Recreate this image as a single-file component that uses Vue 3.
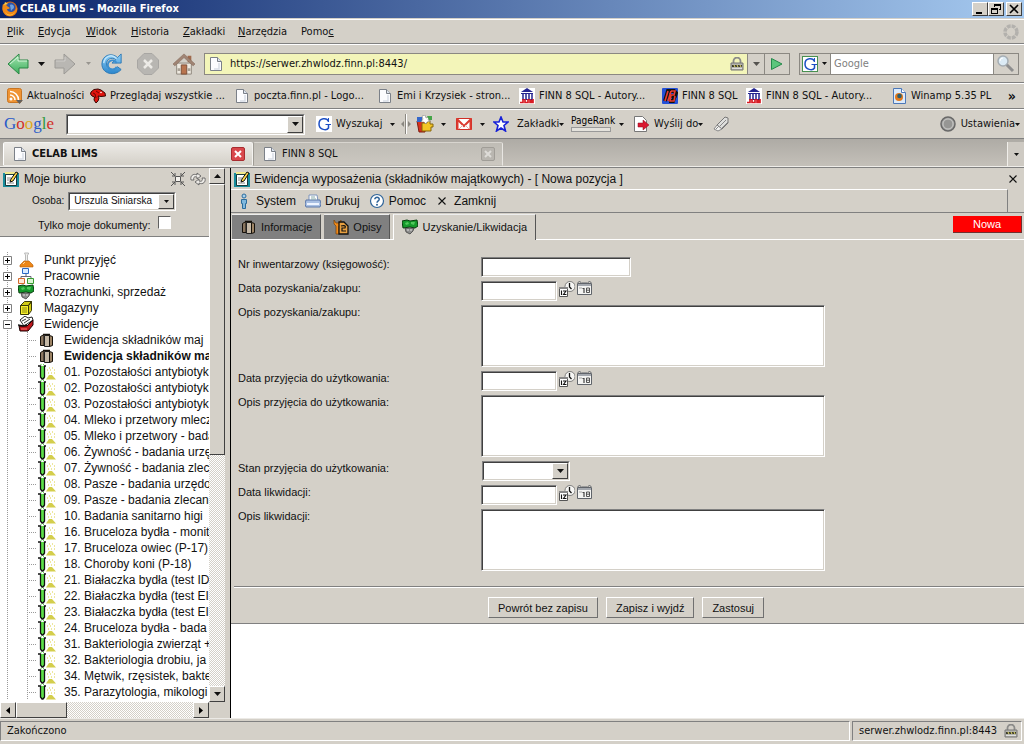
<script setup>
import { ref } from 'vue'

const menus = [
  ['', 'P', 'lik'], ['', 'E', 'dycja'], ['', 'W', 'idok'], ['', 'H', 'istoria'],
  ['', 'Z', 'akładki'], ['', 'N', 'arzędzia'], ['Pomo', 'c', '']
]
const bookmarks = [
  ['rss', 'Aktualności'], ['lizard', 'Przeglądaj wszystkie ...'], ['page', 'poczta.finn.pl - Logo...'],
  ['page', 'Emi i Krzysiek - stron...'], ['duw', 'FINN 8 SQL - Autory...'], ['finn', 'FINN 8 SQL'],
  ['duw', 'FINN 8 SQL - Autory...'], ['winamp', 'Winamp 5.35 PL']
]
const folders = [
  { icon: 'flask', label: 'Punkt przyjęć' },
  { icon: 'network', label: 'Pracownie' },
  { icon: 'money', label: 'Rozrachunki, sprzedaż' },
  { icon: 'box', label: 'Magazyny' },
  { icon: 'records', label: 'Ewidencje', open: true }
]
const leaves = [
  { icon: 'binder', label: 'Ewidencja składników maj' },
  { icon: 'binder', label: 'Ewidencja składników ma', current: true },
  ...[
    '01. Pozostałości antybiotyk', '02. Pozostałości antybiotyk', '03. Pozostałości antybiotyk',
    '04. Mleko i przetwory mlecz', '05. Mleko i przetwory - bada', '06. Żywność - badania urzę',
    '07. Żywność - badania zlec', '08. Pasze - badania urzędo', '09. Pasze - badania zlecan',
    '10. Badania sanitarno higi', '16. Bruceloza bydła - monit', '17. Bruceloza owiec (P-17)',
    '18. Choroby koni (P-18)', '21. Białaczka bydła (test ID', '22. Białaczka bydła (test EI',
    '23. Białaczka bydła (test EI', '24. Bruceloza bydła - bada', '31. Bakteriologia zwierząt +',
    '32. Bakteriologia drobiu, ja', '34. Mętwik, rzęsistek, bakte', '35. Parazytologia, mikologi'
  ].map(label => ({ icon: 'tube', label }))
]
const fields = [
  { id: 'nr', type: 'text', label: 'Nr inwentarzowy (księgowość):' },
  { id: 'data-zakupu', type: 'date', label: 'Data pozyskania/zakupu:' },
  { id: 'opis-zakupu', type: 'area', label: 'Opis pozyskania/zakupu:' },
  { id: 'data-przyjecia', type: 'date', label: 'Data przyjęcia do użytkowania:' },
  { id: 'opis-przyjecia', type: 'area', label: 'Opis przyjęcia do użytkowania:' },
  { id: 'stan', type: 'select', label: 'Stan przyjęcia do użytkowania:' },
  { id: 'data-likwidacji', type: 'date', label: 'Data likwidacji:' },
  { id: 'opis-likwidacji', type: 'area', label: 'Opis likwidacji:' }
]
const values = ref({})
const address = ref('https://serwer.zhwlodz.finn.pl:8443/')
</script>

<template>
  <div class="window">
    <svg class="defs" aria-hidden="true">
      <defs>
        <linearGradient id="gGreen" x1="0" y1="0" x2="0" y2="1"><stop offset="0" stop-color="#a8e6b4" /><stop offset="1" stop-color="#3cae5c" /></linearGradient>
        <linearGradient id="gBlue" x1="0" y1="0" x2="0" y2="1"><stop offset="0" stop-color="#8fd0f8" /><stop offset="1" stop-color="#2b86cc" /></linearGradient>
      </defs>
      <symbol id="caret" viewBox="0 0 7 4"><path d="M0 0h7L3.500 4z" fill="currentColor" /></symbol>
      <symbol id="page" viewBox="0 0 16 16"><path d="M2.500 1.500h7l4 4v9h-11z" fill="#fcfcfe" stroke="#7b8088" /><path d="M9.500 1.500v4h4" fill="#dde4ee" stroke="#7b8088" /><path d="M11 7v6H6" fill="none" stroke="#d8dde6" stroke-width="1.500" /></symbol>
      <symbol id="firefox" viewBox="0 0 16 16"><circle cx="8" cy="8" r="7.500" fill="#d9690c" /><circle cx="8.500" cy="6.500" r="5" fill="#2d53a8" /><path d="M8 4c2-1 4 0 4 2s-2 2-3 4" fill="#6fa3e0" /><path d="M1 3c-2 6 1 12 7 12 5 0 8-5 7-9-1 3-3 5-6 5-2 0-4-1-4-3 1 0 2 0 3-1L5 5C4 3 3 4 1 3z" fill="#f08a18" /><path d="M2 4l1-3 3 2zM3 11c2 3 7 4 10 0-2 4-8 5-10 0z" fill="#ffd04a" /></symbol>
      <symbol id="back" viewBox="0 0 22 22"><path d="M1 11 12 1v6h9v8h-9v6z" fill="url(#gGreen)" stroke="#2b8745" /><path d="M3 11 11 4v4h9" fill="none" stroke="#d5f5da" /></symbol>
      <symbol id="forward" viewBox="0 0 22 22"><path d="M21 11 10 1v6H1v8h9v6z" fill="#b9b7b3" stroke="#9c9a96" /><path d="M2 8h9V4" fill="none" stroke="#cfcdca" /></symbol>
      <symbol id="reload" viewBox="0 0 24 24"><path d="M18 5 22 1v10H12l4-4C11 4 6 7 6 12c0 6 8 8 12 3l4 3C15 26 1 23 1 12 1 2 12-1 18 5z" fill="url(#gBlue)" stroke="#2a77b5" /><path d="M3 11C4 4 11 0 17 6" fill="none" stroke="#c2e6fb" stroke-width="1.500" /><path d="M17 11a5 5 0 1 0 0 4" fill="none" stroke="#3a8fd0" stroke-width="2" /></symbol>
      <symbol id="stop" viewBox="0 0 22 22"><path d="M7 .5h8L21.500 7v8L15 21.500H7L.5 15V7z" fill="#b8b6b2" stroke="#a8a6a3" /><path d="m7 7 8 8M15 7l-8 8" stroke="#eceae6" stroke-width="2.500" /></symbol>
      <symbol id="home" viewBox="0 0 24 24"><path d="M4 11h16v12H4z" fill="#eee9e0" stroke="#8b8378" /><path d="M16 3h4v7h-4z" fill="#a06a4d" /><path d="M0 12 12 1l12 11-2 2L12 5 2 14z" fill="#a08474" stroke="#806455" stroke-width=".6" /><path d="M9 13h6v10H9z" fill="#b9744f" stroke="#7a4c35" /><path d="M5 18h3M16 18h3" stroke="#a9a196" stroke-width="3" /></symbol>
      <symbol id="lock" viewBox="0 0 14 14"><path d="M3.500 7V4a3.500 3.500 0 0 1 7 0v3" fill="none" stroke="#8b8b89" stroke-width="1.800" /><path d="M1 6h12v7H1z" fill="#b5b5ae" stroke="#777" /><path d="M2 8h10v2H2z" fill="#3c3c2c" /><path d="m4 8 1 2m2-2 1 2m2-2 1 2" stroke="#e8df6a" /><path d="M2 11.500h10" stroke="#dedede" /></symbol>
      <symbol id="go" viewBox="0 0 14 14"><path d="M1.500 1.500 12 7 1.500 12.500z" fill="#5cc67c" stroke="#23894a" /></symbol>
      <symbol id="glass" viewBox="0 0 18 18"><path d="m9 9 7 7" stroke="#8e8e8e" stroke-width="3" /><circle cx="6" cy="6" r="5" fill="#dcebf5" stroke="#a5adb3" stroke-width="1.500" /><path d="M3 6a3 3 0 0 1 3-3" stroke="#fff" fill="none" /></symbol>
      <symbol id="throbber" viewBox="0 0 16 16"><circle cx="8" cy="8" r="6" fill="none" stroke="#b3b1ad" stroke-width="3.500" stroke-dasharray="3.700 1" /></symbol>
      <symbol id="g" viewBox="0 0 16 16"><path d="M0 0h16v16H0z" fill="#fff" /><path d="M12.500 5.500C11 1.500 3 1.500 3 8s8 6.500 9.500 4V9" fill="none" stroke="#1c4fc4" stroke-width="1.500" /><path d="M12.500 2v4M9.500 8.500H15" stroke="#1c4fc4" /></symbol>
      <symbol id="rss" viewBox="0 0 16 16"><rect x=".5" y=".5" width="14" height="14" rx="2" fill="#ef9434" stroke="#c87522" /><circle cx="4" cy="11" r="1.500" fill="#fff" /><path d="M3 7a5 5 0 0 1 5 5M3 3.500A8.500 8.500 0 0 1 11.500 12" fill="none" stroke="#fff" stroke-width="1.600" /><path d="M9 12h7l-3.500 4z" fill="#64605c" /></symbol>
      <symbol id="lizard" viewBox="0 0 16 16"><path d="M1 4 4 1.500 8 1l3 1 4 3 .5 3-4.500.5L8 8l1 2-1 3-2 2-2-3 .5-3L2 8 .500 6z" fill="#e0140e" stroke="#3a0502" /><path d="M3 5l2 1 1 4M6 3l3 2" stroke="#710604" fill="none" /><circle cx="11" cy="4.500" r=".8" fill="#fff" /></symbol>
      <symbol id="duw" viewBox="0 0 16 16"><path d="M0 0h16v16H0z" fill="#fff" /><path d="M2 4 8 0l6 4zM2 5h12v1H2zM3 11h11v1H3z" fill="#24248f" /><path d="M4 6v5M7 6v5M10 6v5M13 6v5" stroke="#24248f" stroke-width="1.500" /><path d="M1 14.500h3V11v3.500M6 11v3.500h3V11m2 0v3.500h1.500V12v2.500H14V11" fill="none" stroke="#d81c24" stroke-width="1.700" /></symbol>
      <symbol id="finn" viewBox="0 0 16 16"><rect width="16" height="16" rx="1" fill="#2450d8" /><path d="M3 13 6 3h6l2 2-1 3H5h6l1 2-1 3H7" fill="none" stroke="#111" stroke-width="4" /><path d="M3 13 6 3m3 0h4l-1 4H9l-1 6h4l1-5M9 3 6 13" fill="none" stroke="#ec3b30" stroke-width="1.600" /></symbol>
      <symbol id="winamp" viewBox="0 0 16 16"><path d="M2.500.5h8l4 4v11h-12z" fill="#dceafa" stroke="#4d78b8" /><path d="M10.500.5v4h4" fill="#fff" stroke="#4d78b8" /><circle cx="8" cy="9" r="4" fill="#e0781c" /><circle cx="8.500" cy="8" r="2.300" fill="#2c5d6e" /></symbol>
      <symbol id="puzzle" viewBox="0 0 18 18"><path d="M1 6h8v11H3z" fill="#d8321d" stroke="#7c1c10" /><path d="M6 8h5V6h3v3h3v3h-2v4H6z" fill="#f3c526" stroke="#86660c" /><path d="M1 2h5v5H1z" fill="#3568ca" /><path d="M9 0l1 3 3-1-1 3 3 1-4 1-1 2-2-2-3 0 2-3-1-3z" fill="#fff" stroke="#777" stroke-width=".5" /><path d="M11 1h5v4h-3z" fill="#45a447" /></symbol>
      <symbol id="mail" viewBox="0 0 16 12"><path d="M.5.5h15v11H.5z" fill="#fff" stroke="#cf2e26" /><path d="M1.500 12V1.500L8 8l6.500-6.500V12" fill="none" stroke="#dc3b30" stroke-width="2" /><path d="m3 11 4-4m6 4L9 7" stroke="#e5b1ac" /></symbol>
      <symbol id="star" viewBox="0 0 16 16"><path d="m8 1 2 5h5l-4 3.500 1.500 5.500L8 12l-4.500 3L5 9.500 1 6h5z" fill="#fff" stroke="#1822d8" stroke-width="1.600" /></symbol>
      <symbol id="send" viewBox="0 0 16 16"><path d="M1.500.5h8l4 4v11h-12z" fill="#fff" stroke="#777" /><path d="M5 7h5V4l6 5-6 5v-3H5z" fill="#da1830" stroke="#8a0818" stroke-width=".5" /></symbol>
      <symbol id="marker" viewBox="0 0 16 16"><path d="m4 9 8-8 3 1v5l-6 6z" fill="#dededc" stroke="#777" /><path d="M4 9 1 13l4 2 4-2z" fill="#f3f3f1" stroke="#888" /><path d="m7 10 6-6M9 12l6-6M3 13l3-3" stroke="#888" /></symbol>
      <symbol id="orb" viewBox="0 0 16 16"><circle cx="8" cy="8" r="7" fill="#a6a6a4" stroke="#686868" stroke-width="1.500" /><circle cx="8" cy="8" r="5" fill="#969694" stroke="#c9c9c7" /></symbol>
      <symbol id="splitter" viewBox="0 0 10 20"><path d="M4 0h1v20H4z" fill="#8a8780" /><path d="M5 0h1v20H5z" fill="#fff" /><path d="M3 7v6L0 10zm4 0v6l3-3z" fill="#8a8780" /></symbol>
      <symbol id="edit" viewBox="0 0 16 16"><path d="M0 2h16v14H0z" fill="#178c9c" /><path d="M2 1h12v2H2z" fill="#f0e88c" /><path d="M2.500 3.500h11v11h-11z" fill="#fff" stroke="#1a3a3c" /><path d="M4 7h4M4 9h3M4 12h7" stroke="#888" /><path d="m7 11 1-3 5-7 2 1-5 8z" fill="#ffd94a" stroke="#111" /></symbol>
      <symbol id="compress" viewBox="0 0 14 14"><path d="M4.500 4.500h5v5h-5z" fill="#f4f2ee" stroke="#555" /><path d="m0 0 4 4M14 0l-4 4M0 14l4-4m10 4-4-4M4 1v3H1m9-3v3h3M4 13v-3H1m9 3v-3h3" fill="none" stroke="#555" /></symbol>
      <symbol id="refresh" viewBox="0 0 16 14"><path d="M1 8C0 4 3 1 7 3V1l4 3-4 3V5C4 4 3 6 4 8zM15 6c1 4-2 7-6 5v2L5 10l4-3v2c3 1 4-1 3-3z" fill="#eceae6" stroke="#555" stroke-width=".8" /></symbol>
      <symbol id="flask" viewBox="0 0 16 16"><path d="M6.500 1h4v1l-1 1v5l4 5H4l3.500-5V3z" fill="#f0f0ee" stroke="#aaa" stroke-width=".8" /><path d="m6 9-4 4v2h13v-2l-4-4z" fill="#ed8718" stroke="#b25b08" stroke-width=".6" /><path d="M5 12l2-2" stroke="#ffd69a" /></symbol>
      <symbol id="network" viewBox="0 0 16 16"><path d="M8 6v3M3 12V8.500h10V12" fill="none" stroke="#667" /><path d="M4.500.5h6v5h-6z" fill="#dcecff" stroke="#2c68c4" /><path d="M.5 10.500h6v5h-6z" fill="#ffe8d8" stroke="#d46a2c" /><path d="M9.500 10.500h6v5h-6z" fill="#daf6d4" stroke="#379b31" /></symbol>
      <symbol id="money" viewBox="0 0 16 14"><path d="M0 1 5 0l3 1 7-1 1 6-3 2-5-1-7 1z" fill="#159a2b" stroke="#063f0d" /><path d="m3 3 3-1 1 2-3 1zm6-1 4 0-1 3-3-1z" fill="#50c85c" /><path d="M3 8l4 0 5 0-1 3-3 3-4-2z" fill="#8d8d8d" stroke="#333" stroke-width=".7" /><path d="M6 9v2m3-2v2" stroke="#ddd" /></symbol>
      <symbol id="box" viewBox="0 0 16 16"><path d="m2.500 5.500 4-4h7l-3 4zM10.500 5.500l3-4v9l-3 4z" fill="#d3cb16" stroke="#3a3906" /><path d="M2.500 5.500h8v9h-8z" fill="#f8f12b" stroke="#3a3906" /><path d="M4 8h5M4 10h5M4 12h5" stroke="#8c8712" /></symbol>
      <symbol id="records" viewBox="0 0 16 16"><path d="M2 4 7 0l3 2 4-1 1 3-9 6z" fill="#fff" stroke="#222" /><path d="m4 5 4-2m-2 4 6-4" stroke="#333" /><path d="M1 10h8l6-6v5l-5 6H2z" fill="#bc171c" stroke="#1a0202" /><path d="M0 9l5 1 4-1" stroke="#111" stroke-width="1.500" fill="none" /><path d="M3 13h6" stroke="#f77" /></symbol>
      <symbol id="binder" viewBox="0 0 16 16"><path d="M1.500 4.500 5 2.500v11l-3.500 0z" fill="#8a7660" stroke="#15100a" /><path d="M5.500 3.500h5v11h-5z" fill="#c4b8a6" stroke="#222" /><path d="m10.500 3.500 3 1v9l-3 1z" fill="#9d8465" stroke="#15100a" /><path d="M4 2.500h7" stroke="#15100a" stroke-width="1.500" /></symbol>
      <symbol id="tube" viewBox="0 0 18 16"><path d="M2 2h5v11l-1 2H4l-2-2z" fill="#5ee048" /><path d="M0 2h2.500v11L4 15h1l1.500-2V2H8" fill="none" stroke="#111" stroke-width="1.300" /><path d="M3 0v1M5 0l1 1" stroke="#5ee048" /><path d="m8 15.500 3-4.500h3l4 4.500z" fill="#d4ce4c" /><path d="M11 4h1m2 0h1M9 6h1m2 0h1m3 0h1M10 9h1m2 0h1m2 0h1" stroke="#dccf3c" /></symbol>
      <symbol id="person" viewBox="0 0 8 16"><circle cx="4" cy="3" r="2" fill="#a7d2ee" stroke="#2c6c9c" /><path d="M1.500 6.500h5v4h-1v5h-3v-5h-1z" fill="#7fb8de" stroke="#2c6c9c" /></symbol>
      <symbol id="printer" viewBox="0 0 16 14"><path d="M4 7V1h8l1 6z" fill="#fff" stroke="#7d94bc" /><path d="M1 6h14l1 4-1 3H1l-1-3z" fill="#a9bfe2" stroke="#5c78aa" /><path d="M6 3h4M6 5h5" stroke="#8aa" /><path d="M2 10h12" stroke="#eef4ff" stroke-width="2" /></symbol>
      <symbol id="help" viewBox="0 0 16 16"><circle cx="8" cy="8" r="6.500" fill="#fff" stroke="#2f6499" stroke-width="1.200" /><path d="M5.800 6.300C5.800 3.600 10.500 3.600 10.200 6.500 10 8 8 8 8 9.800" fill="none" stroke="#2f6499" stroke-width="1.500" /><circle cx="8" cy="11.800" r="1" fill="#2f6499" /></symbol>
      <symbol id="cross" viewBox="0 0 8 8"><path d="m.5.5 7 7m0-7-7 7" stroke="#111" stroke-width="1.100" /></symbol>
      <symbol id="notes" viewBox="0 0 16 16"><path d="M1 1v4l2 2v8h3V7l2-2V1L6 4H3z" fill="#f08b1c" stroke="#75400a" stroke-width=".7" /><path d="M6 3h5l4 4v8H6z" fill="#e8a040" stroke="#111" stroke-width="1.300" /><path d="M8 7c4-1 5 0 4 2H9l0 3h4" fill="none" stroke="#111" stroke-width="1.200" /></symbol>
      <symbol id="clock" viewBox="0 0 16 16"><circle cx="11" cy="5.500" r="5" fill="#f6f6f4" stroke="#666" stroke-width=".8" /><path d="M10.500 2v4l2 2" fill="none" stroke="#111" stroke-width="1.300" /><path d="M.5 6.500h8v9h-8z" fill="#fff" stroke="#555" /><path d="M0 7h9" stroke="#888" stroke-width="2" /><path d="M2.500 9.500v4.500M4 10h3L4.500 13.500H7.500" fill="none" stroke="#111" stroke-width="1.100" /></symbol>
      <symbol id="calendar" viewBox="0 0 16 16"><path d="M.5 2.500h14v11H.5z" fill="#f4f4f2" stroke="#60646a" /><path d="M1 3h13v2H1z" fill="#a4a8ae" /><path d="M1 2C1 0 4 0 4 2m1 0h5m1 0c0-2 3-2 3 0" fill="none" stroke="#60646a" /><path d="M2 7h3" stroke="#aaa" /><path d="M5.500 7.500H7V12" fill="none" stroke="#444" stroke-width="1.200" /><path d="M9.500 7h3v4.500h-3zM9.500 9.200h3" fill="none" stroke="#444" stroke-width=".9" /></symbol>
    </svg>

    <header class="titlebar">
      <svg class="i16"><use href="#firefox" /></svg>
      <h1>CELAB LIMS - Mozilla Firefox</h1>
      <button class="winbtn" aria-label="Minimalizuj"><svg viewBox="0 0 10 10"><path d="M1 8h6v2H1z" /></svg></button>
      <button class="winbtn" aria-label="Przywróć"><svg viewBox="0 0 10 10"><path d="M3 0h7v6H8V5h1V2H4v1H3zM0 4h7v6H0zm1 2v3h5V6z" fill-rule="evenodd" /></svg></button>
      <button class="winbtn last" aria-label="Zamknij okno"><svg viewBox="0 0 10 10"><path d="m1 1 8 8m0-8L1 9" stroke="#000" stroke-width="1.600" /></svg></button>
    </header>

    <nav class="menubar">
      <button v-for="m in menus" :key="m[2]">{{ m[0] }}<u>{{ m[1] }}</u>{{ m[2] }}</button>
      <svg class="i16"><use href="#throbber" /></svg>
    </nav>

    <div class="navbar">
      <button aria-label="Wstecz"><svg class="i22"><use href="#back" /></svg></button>
      <button aria-label="Historia wstecz"><svg class="caret"><use href="#caret" /></svg></button>
      <button aria-label="Dalej"><svg class="i22"><use href="#forward" /></svg></button>
      <button class="dim" aria-label="Historia dalej"><svg class="minicaret"><use href="#caret" /></svg></button>
      <button aria-label="Odśwież"><svg class="i22"><use href="#reload" /></svg></button>
      <button aria-label="Zatrzymaj"><svg class="i22"><use href="#stop" /></svg></button>
      <button aria-label="Strona startowa"><svg class="i22"><use href="#home" /></svg></button>
      <div class="address">
        <svg class="i16"><use href="#page" /></svg>
        <input v-model="address" type="text" aria-label="Adres">
        <svg class="i14"><use href="#lock" /></svg>
        <button class="cell dim2" aria-label="Pokaż adresy"><svg class="caret"><use href="#caret" /></svg></button>
        <button class="cell go" aria-label="Przejdź"><svg class="i14"><use href="#go" /></svg></button>
      </div>
      <div class="search">
        <button class="engine" aria-label="Wyszukiwarka"><svg class="i16 gbox"><use href="#g" /></svg><svg class="minicaret"><use href="#caret" /></svg></button>
        <input type="text" placeholder="Google" aria-label="Szukaj">
        <button class="cell go" aria-label="Szukaj teraz"><svg class="i18"><use href="#glass" /></svg></button>
      </div>
    </div>

    <nav class="bookmarks">
      <a v-for="(b, i) in bookmarks" :key="i" href="#"><svg class="i16"><use :href="'#' + b[0]" /></svg>{{ b[1] }}</a>
      <button class="more" aria-label="Więcej zakładek">»</button>
    </nav>

    <div class="gbar">
      <a class="glogo" href="#"><span class="b">G</span><span class="r">o</span><span class="y">o</span><span class="b">g</span><span class="gr">l</span><span class="r">e</span></a>
      <span class="combo wide"><input type="text" aria-label="Szukaj w Google"><button class="drop" aria-label="Rozwiń"><svg class="caret"><use href="#caret" /></svg></button></span>
      <button><svg class="i16"><use href="#g" /></svg>Wyszukaj</button>
      <svg class="minicaret"><use href="#caret" /></svg>
      <svg class="split"><use href="#splitter" /></svg>
      <button aria-label="Dodatki"><svg class="i18"><use href="#puzzle" /></svg></button>
      <svg class="minicaret"><use href="#caret" /></svg>
      <button aria-label="Gmail"><svg class="mail"><use href="#mail" /></svg></button>
      <svg class="minicaret"><use href="#caret" /></svg>
      <button aria-label="Gwiazdka"><svg class="i16"><use href="#star" /></svg></button>
      <button class="tight">Zakładki<svg class="minicaret"><use href="#caret" /></svg></button>
      <div class="rank"><span>PageRank</span><i /></div>
      <svg class="minicaret"><use href="#caret" /></svg>
      <button class="tight"><svg class="i16 gap"><use href="#send" /></svg>Wyślij do<svg class="minicaret"><use href="#caret" /></svg></button>
      <button aria-label="Zakreślacz"><svg class="i16"><use href="#marker" /></svg></button>
      <button class="tight right"><svg class="i16 gap"><use href="#orb" /></svg>Ustawienia<svg class="minicaret"><use href="#caret" /></svg></button>
    </div>

    <div class="tabstrip">
      <div class="btab on"><svg class="i16"><use href="#page" /></svg><a href="#">CELAB LIMS</a><button aria-label="Zamknij kartę"><svg viewBox="0 0 8 8"><path d="m1 1 6 6m0-6L1 7" stroke="#fff" stroke-width="2" /></svg></button></div>
      <div class="btab"><svg class="i16"><use href="#page" /></svg><a href="#">FINN 8 SQL</a><button aria-label="Zamknij kartę"><svg viewBox="0 0 8 8"><path d="m1 1 6 6m0-6L1 7" stroke="#dedcd8" stroke-width="2" /></svg></button></div>
      <button class="alltabs" aria-label="Lista kart"><svg class="minicaret"><use href="#caret" /></svg></button>
    </div>

    <div class="content">
      <aside class="sidebar">
        <div class="sidemain">
          <div class="sidehead">
            <div class="sidetitle">
              <svg class="i16"><use href="#edit" /></svg><h2>Moje biurko</h2>
              <button aria-label="Zwiń"><svg class="i14"><use href="#compress" /></svg></button>
              <button aria-label="Odśwież drzewo"><svg class="i16"><use href="#refresh" /></svg></button>
            </div>
            <div class="person">
              <label for="osoba">Osoba:</label>
              <span class="combo"><select id="osoba"><option>Urszula Siniarska</option></select><span class="drop"><svg class="minicaret"><use href="#caret" /></svg></span></span>
            </div>
            <div class="only"><label for="moje">Tylko moje dokumenty:</label><input id="moje" type="checkbox"></div>
          </div>
          <div class="tree">
            <ul>
              <li v-for="f in folders" :key="f.label" class="folder">
                <button class="toggle" :aria-label="f.open ? 'Zwiń' : 'Rozwiń'"><svg viewBox="0 0 9 9"><path d="M.5.5h8v8h-8z" fill="#fff" stroke="#808080" /><path :d="f.open ? 'M2 4h5v1H2z' : 'M2 4h5v1H2zM4 2h1v5H4z'" /></svg></button>
                <svg class="i16"><use :href="'#' + f.icon" /></svg><a href="#">{{ f.label }}</a>
              </li>
            </ul>
            <ul class="sub">
              <li v-for="(l, i) in leaves" :key="i" class="leaf" :class="{ current: l.current }">
                <svg class="leaficon"><use :href="'#' + l.icon" /></svg><a href="#">{{ l.label }}</a>
              </li>
            </ul>
          </div>
          <div class="hscroll">
            <button class="sb" aria-label="W lewo"><svg viewBox="0 0 4 7"><path d="M4 0v7L0 3.500z" /></svg></button>
            <div class="thumb" />
            <button class="sb" aria-label="W prawo"><svg viewBox="0 0 4 7"><path d="M0 0v7l4-3.500z" /></svg></button>
          </div>
        </div>
        <div class="vscroll">
          <button class="sb" aria-label="W górę"><svg class="caret up"><use href="#caret" /></svg></button>
          <div class="track"><div class="thumb" /></div>
          <button class="sb" aria-label="W dół"><svg class="caret"><use href="#caret" /></svg></button>
          <div class="corner" />
        </div>
      </aside>

      <main class="main">
        <section class="panel">
          <div class="paneltitle">
            <svg class="i16"><use href="#edit" /></svg>
            <h2>Ewidencja wyposażenia (składników majątkowych) - [ Nowa pozycja ]</h2>
            <button aria-label="Zamknij panel"><svg class="i8"><use href="#cross" /></svg></button>
          </div>
          <div class="panelmenu">
            <button><svg class="narrow"><use href="#person" /></svg>System</button>
            <button><svg class="i16"><use href="#printer" /></svg>Drukuj</button>
            <button><svg class="i16"><use href="#help" /></svg>Pomoc</button>
            <button><svg class="i8"><use href="#cross" /></svg>Zamknij</button>
          </div>
          <div class="ptabs">
            <button class="ptab"><svg class="i16"><use href="#binder" /></svg>Informacje</button>
            <button class="ptab"><svg class="i16"><use href="#notes" /></svg>Opisy</button>
            <button class="ptab on"><svg class="i16"><use href="#money" /></svg>Uzyskanie/Likwidacja</button>
            <strong class="badge">Nowa</strong>
          </div>
          <form @submit.prevent>
            <div class="fields">
              <template v-for="f in fields" :key="f.id">
                <label :for="f.id">{{ f.label }}</label>
                <textarea v-if="f.type === 'area'" :id="f.id" v-model="values[f.id]" />
                <span v-else-if="f.type === 'select'" class="combo state"><select :id="f.id" v-model="values[f.id]"><option value="" /></select><span class="drop"><svg class="caret"><use href="#caret" /></svg></span></span>
                <div v-else-if="f.type === 'date'" class="date">
                  <input :id="f.id" v-model="values[f.id]" type="text">
                  <button type="button" aria-label="Data i czas"><svg class="i16"><use href="#clock" /></svg></button>
                  <button type="button" aria-label="Kalendarz"><svg class="i16"><use href="#calendar" /></svg></button>
                </div>
                <input v-else :id="f.id" v-model="values[f.id]" class="number" type="text">
              </template>
            </div>
            <div class="actions">
              <button type="button">Powrót bez zapisu</button>
              <button type="submit">Zapisz i wyjdź</button>
              <button type="button">Zastosuj</button>
            </div>
          </form>
        </section>
      </main>
    </div>

    <footer class="status">
      <span class="msg">Zakończono</span>
      <span class="host">serwer.zhwlodz.finn.pl:8443<svg class="i14"><use href="#lock" /></svg></span>
    </footer>
  </div>
</template>

<style>
html, body { margin: 0; background: #d4d0c8; }
</style>

<style scoped>
.window {
  --face: #d4d0c8;
  --line: #808080;
  height: 100vh;
  display: flex;
  flex-direction: column;
  overflow: hidden;
  background: var(--face);
  color: #111;
  font: 11px/16px "DejaVu Sans Condensed", "Noto Sans", sans-serif;
}
*, *::before, *::after { box-sizing: border-box; }
.defs { position: absolute; width: 0; height: 0; }
svg { display: block; flex: none; }
h1, h2, ul { margin: 0; padding: 0; list-style: none; font: inherit; }
button { margin: 0; padding: 0; border: 0; background: none; color: inherit; font: inherit; display: flex; align-items: center; white-space: nowrap; }
a { color: inherit; text-decoration: none; white-space: nowrap; }
input, select, textarea { margin: 0; padding: 0 3px; border: 0; border-radius: 0; background: #fff; font: inherit; color: inherit; outline: 0; min-width: 0; }
.i8 { width: 8px; height: 8px; }
.i14 { width: 14px; height: 14px; }
.i16 { width: 16px; height: 16px; }
.i18 { width: 18px; height: 18px; }
.i22 { width: 22px; height: 22px; }
.caret { width: 7px; height: 4px; }
.minicaret { width: 5px; height: 3px; }

.titlebar { flex: none; display: flex; align-items: center; height: 18px; padding: 0 2px; background: linear-gradient(90deg, #0a246a, #a6caf0); color: #fff; }
.titlebar h1 { flex: 1; padding-left: 2px; font-weight: bold; }
.winbtn { width: 16px; height: 14px; justify-content: center; background: var(--face); border: 1px solid; border-color: #fff #404040 #404040 #fff; }
.winbtn svg { width: 10px; height: 10px; }
.winbtn.last { margin-left: 2px; }

.menubar, .navbar, .bookmarks, .gbar { flex: none; align-items: center; border-top: 1px solid #fff; border-bottom: 1px solid var(--line); }
.menubar { display: grid; grid-template-columns: 31px 48px 45px 52px 55px 63px 1fr auto; height: 25px; margin-top: 1px; padding: 0 5px 0 7px; }
.navbar { display: grid; grid-template-columns: 31px 16px 32px 15px 36px 36px 31px 1fr 220px; height: 39px; padding: 0 5px 0 7px; }
.dim { color: #98958f; }
.dim2 { color: #55534f; }
.address, .search { display: flex; align-items: center; height: 22px; border: 1px solid #8b8882; }
.address { background: #f3f5b9; margin-right: 9px; }
.address > .i16 { margin-left: 3px; }
.address input { flex: 1; background: transparent; padding-left: 6px; }
.address > .i14 { margin-right: 3px; }
.cell { width: 17px; height: 20px; justify-content: center; background: var(--face); border-left: 1px solid #8b8882; }
.cell.go { width: 25px; }
.engine { gap: 4px; padding: 0 3px 0 2px; height: 20px; background: var(--face); border-right: 1px solid #8b8882; }
.gbox { outline: 1px solid #489050; outline-offset: -1px; }
.search input { flex: 1; height: 20px; }
.search input::placeholder { color: #808080; opacity: 1; }

.bookmarks { display: grid; grid-template-columns: 83px 144px 143px 142px 143px 84px 145px 1fr auto; height: 26px; padding: 0 8px 0 7px; }
.bookmarks a { display: flex; align-items: center; gap: 4px; }
.more { font-size: 14px; font-weight: bold; }

.gbar { display: grid; grid-template-columns: 62px 250px 74px 11px 15px 25px 15px 24px 13px 24px 54px 48px 14px 80px 20px 1fr; height: 30px; padding: 0 4px; }
.gbar button { gap: 4px; }
.gbar .tight { gap: 0; }
.gbar .gap { margin-right: 5px; }
.gbar .right { justify-self: end; }
.glogo { font: 17px/20px "Liberation Serif", serif; }
.b { color: #2a5bc8; } .r { color: #d12f28; } .y { color: #e0a81c; } .gr { color: #2f9a3c; }
.split { width: 10px; height: 20px; }
.mail { width: 16px; height: 12px; }
.rank { font: 10px/10px "DejaVu Sans Condensed", sans-serif; color: #000; }
.rank span { display: block; }
.rank i { display: block; width: 40px; height: 5px; margin-top: 1px; border: 1px solid #999; background: #e4e2dc; }

.combo { position: relative; display: flex; border: 1px solid; border-color: #808080 #fff #fff #808080; background: #fff; }
.combo::before { content: ""; position: absolute; inset: 0; border: 1px solid; border-color: #404040 var(--face) var(--face) #404040; pointer-events: none; }
.combo select, .combo input { flex: 1; appearance: none; }
.drop { position: absolute; top: 1px; right: 1px; bottom: 1px; width: 16px; display: flex; align-items: center; justify-content: center; background: var(--face); border: 1px solid; border-color: #fff #404040 #404040 #fff; pointer-events: none; }
.wide { width: 239px; height: 21px; }

.tabstrip { flex: none; display: flex; height: 28px; padding: 3px 0 0 3px; background: linear-gradient(#aeaba5, #c4c0b9); border-bottom: 1px solid #efede9; }
.btab { display: flex; align-items: center; width: 250px; padding: 0 7px 0 8px; background: linear-gradient(#bfbcb5, #cbc7c0); border: 1px solid; border-color: #d8d5cf #e8e6e2 transparent #9f9c95; border-radius: 2px 2px 0 0; }
.btab a { flex: 1; padding-left: 4px; }
.btab.on { background: linear-gradient(#eceae6, #d4d0c8); border-color: #f4f3f0 #f4f3f0 transparent #fff; font-weight: bold; }
.btab button { width: 14px; height: 14px; justify-content: center; border: 1px solid #a09d97; border-radius: 2px; background: #b9b6b0; }
.btab.on button { border-color: #a82c30; background: #d9484c; }
.btab button svg { width: 8px; height: 8px; }
.alltabs { width: 17px; margin-left: auto; justify-content: center; background: #cecac3; border-left: 1px solid #f0eeea; }

.content { flex: 1; min-height: 0; display: flex; border-top: 1px solid var(--line); font-family: "Liberation Sans", Arial, sans-serif; }
.sidebar { width: 231px; flex: none; display: flex; border-right: 1px solid #000; }
.sidemain { width: 209px; display: flex; flex-direction: column; }
.sidehead { flex: none; height: 69px; border-bottom: 1px solid var(--line); font-size: 10px; }
.sidetitle { display: flex; align-items: center; height: 22px; padding: 0 3px; gap: 5px; font-size: 12px; }
.sidetitle h2 { flex: 1; }
.person { display: flex; align-items: center; gap: 4px; padding-left: 32px; height: 22px; }
.person .combo { width: 108px; height: 19px; }
.person select { padding-left: 5px; }
.only { display: flex; align-items: center; gap: 7px; padding: 4px 0 0 38px; font-size: 11px; }
.only input { appearance: none; width: 13px; height: 13px; padding: 0; margin-bottom: 4px; border: 1px solid; border-color: #606060 #fff #fff #606060; }
.tree { flex: 1; min-height: 0; overflow: hidden; padding-top: 15px; background: #fff; font-size: 12px; }
.tree ul { background: repeating-linear-gradient(#999 0 1px, transparent 1px 2px) 7px 0 / 1px 100% no-repeat; }
.tree li { display: flex; align-items: center; height: 16px; }
.folder { padding-left: 3px; }
.toggle { width: 15px; }
.toggle svg { width: 9px; height: 9px; }
.folder a { padding-left: 10px; }
.leaf { padding-left: 38px; background: repeating-linear-gradient(#999 0 1px, transparent 1px 2px) 27px 0 / 1px 100% no-repeat, repeating-linear-gradient(90deg, #999 0 1px, transparent 1px 2px) 27px 8px / 9px 1px no-repeat; }
.leaf a { padding-left: 8px; }
.leaficon { width: 18px; height: 16px; }
.current { font-weight: bold; }
.hscroll, .vscroll { flex: none; display: flex; background: repeating-conic-gradient(#fff 0 25%, #d4d0c8 0 50%) 0 0 / 2px 2px; }
.hscroll { height: 16px; }
.hscroll .sb:last-child { margin-left: auto; }
.hscroll .thumb { width: 51px; }
.vscroll { width: 16px; flex-direction: column; }
.track { flex: 1; min-height: 0; }
.vscroll .thumb { height: 54%; }
.corner { height: 16px; background: var(--face); }
.sb, .thumb { background: var(--face); border: 1px solid; border-color: #fff #404040 #404040 #fff; }
.sb { width: 16px; height: 16px; justify-content: center; }
.sb svg { width: 4px; height: 7px; }
.sb .caret { width: 7px; height: 4px; }
.up { transform: rotate(180deg); }

.main { flex: 1; min-width: 0; background: #fff; }
.panel { background: var(--face); border-bottom: 1px solid var(--line); }
.paneltitle { display: flex; align-items: center; height: 21px; padding: 0 7px 0 3px; font-size: 12px; gap: 4px; }
.paneltitle h2 { flex: 1; }
.panelmenu { display: flex; align-items: center; height: 23px; gap: 9px; margin-right: 16px; padding-left: 9px; border-top: 1px solid #fff; border-right: 1px solid var(--line); font-size: 12px; }
.panelmenu button { gap: 4px; }
.narrow { width: 8px; height: 16px; margin-right: 4px; }
.panelmenu .i8 { margin: 0 4px 0 3px; }
.ptabs { display: flex; align-items: stretch; gap: 3px; height: 28px; padding: 0 2px 0 1px; border-top: 1px solid var(--line); border-bottom: 1px solid #fff; }
.ptab { gap: 4px; margin-top: 1px; padding: 0 8px 1px 9px; background: #808080; border-right: 1px solid #555; border-top: 1px solid #eee; }
.ptab.on { background: var(--face); margin-bottom: -1px; padding-left: 8px; border-left: 1px solid #fff; }
.badge { align-self: center; margin: 0 0 4px auto; width: 69px; height: 17px; background: #f00; color: #fff; font-weight: normal; text-align: center; border-right: 1px solid #703030; border-bottom: 1px solid #703030; }
.fields { display: grid; grid-template-columns: 243px minmax(0, 344px); row-gap: 4px; padding: 17px 7px 15px; line-height: 14px; }
.number, .date input, textarea { border: 1px solid; border-color: #808080 #fff #fff #808080; box-shadow: inset 1px 1px #404040, inset -1px -1px #d4d0c8; }
.number { width: 150px; height: 20px; }
.date { display: flex; align-items: flex-start; gap: 2px; height: 20px; }
.date input { width: 76px; height: 20px; }
textarea { display: block; width: 100%; height: 62px; resize: none; }
.state { width: 88px; height: 20px; margin-left: 1px; }
.actions { display: flex; justify-content: center; gap: 8px; padding: 10px 6px 5px 0; margin-left: 3px; border-top: 1px solid var(--line); box-shadow: inset 0 1px #fff; }
.actions button { height: 21px; padding: 0 9px; border: 1px solid; border-color: #fff #707070 #707070 #fff; }

.status { flex: none; display: flex; gap: 2px; height: 26px; padding: 2px 2px 3px 0; border-top: 1px solid #eceae6; }
.msg, .host { display: flex; align-items: center; border: 1px solid; border-color: var(--line) #fff #fff var(--line); }
.msg { flex: 1; padding-left: 6px; }
.host { width: 170px; padding: 0 3px 0 6px; justify-content: space-between; }
</style>
